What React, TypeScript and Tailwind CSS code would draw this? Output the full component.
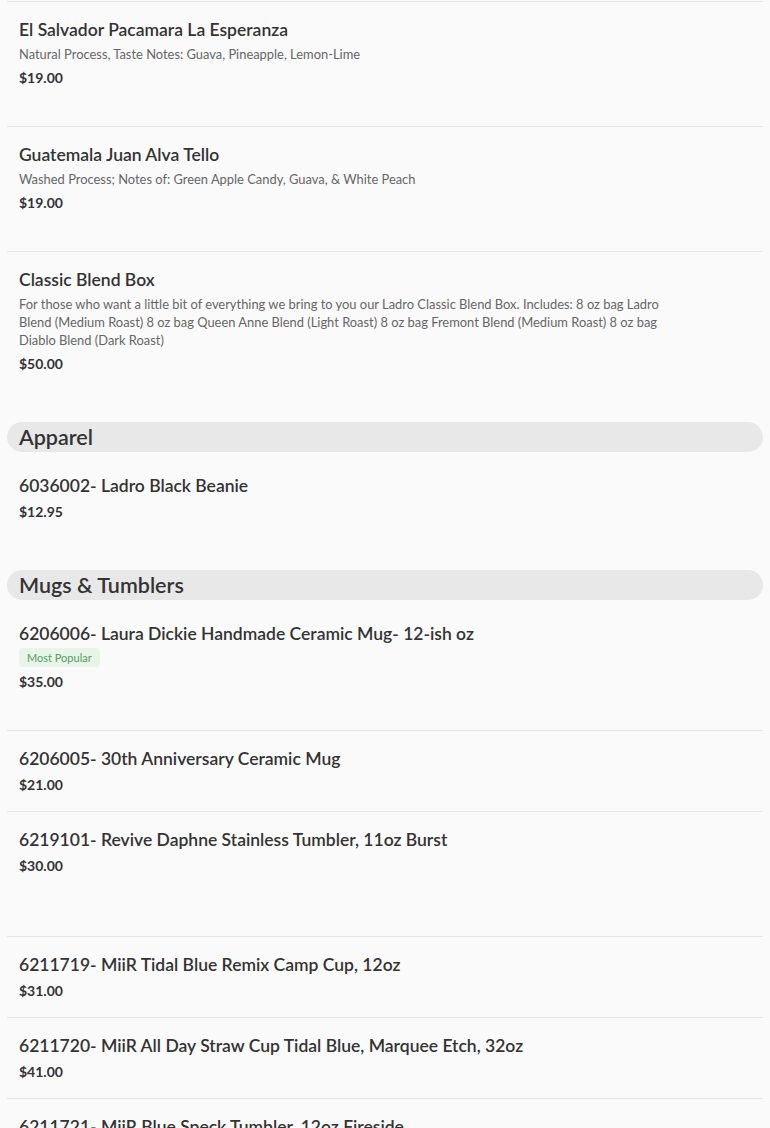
type Item = {
  title: string;
  desc?: string;
  badge?: string;
  price: string;
  tall?: boolean;
  border?: boolean;
};

type Section = {
  name?: string;
  items: Item[];
};

const sections: Section[] = [
  {
    items: [
      {
        title: "El Salvador Pacamara La Esperanza",
        desc: "Natural Process, Taste Notes: Guava, Pineapple, Lemon-Lime",
        price: "$19.00",
        tall: true,
        border: true,
      },
      {
        title: "Guatemala Juan Alva Tello",
        desc: "Washed Process; Notes of: Green Apple Candy, Guava, & White Peach",
        price: "$19.00",
        tall: true,
        border: true,
      },
      {
        title: "Classic Blend Box",
        desc: "For those who want a little bit of everything we bring to you our Ladro Classic Blend Box. Includes: 8 oz bag Ladro Blend (Medium Roast) 8 oz bag Queen Anne Blend (Light Roast) 8 oz bag Fremont Blend (Medium Roast) 8 oz bag Diablo Blend (Dark Roast)",
        price: "$50.00",
        tall: true,
      },
    ],
  },
  {
    name: "Apparel",
    items: [{ title: "6036002- Ladro Black Beanie", price: "$12.95" }],
  },
  {
    name: "Mugs & Tumblers",
    items: [
      {
        title: "6206006- Laura Dickie Handmade Ceramic Mug- 12-ish oz",
        badge: "Most Popular",
        price: "$35.00",
        tall: true,
        border: true,
      },
      { title: "6206005- 30th Anniversary Ceramic Mug", price: "$21.00", border: true },
      {
        title: "6219101- Revive Daphne Stainless Tumbler, 11oz Burst",
        price: "$30.00",
        tall: true,
        border: true,
      },
      { title: "6211719- MiiR Tidal Blue Remix Camp Cup, 12oz", price: "$31.00", border: true },
      {
        title: "6211720- MiiR All Day Straw Cup Tidal Blue, Marquee Etch, 32oz",
        price: "$41.00",
        border: true,
      },
      { title: "6211721- MiiR Blue Speck Tumbler, 12oz Fireside", price: "$36.00", border: true },
    ],
  },
];

function MenuItem({ item }: { item: Item }) {
  return (
    <div
      className={`px-3 pt-[17px] pb-4 ${item.tall ? "min-h-[125px]" : ""} ${
        item.border ? "border-b border-[#e6e6e6]" : ""
      }`}
    >
      <div className="max-w-[645px]">
        <h3 className="text-[17.5px] leading-[22px] font-semibold text-[#333333]">{item.title}</h3>
        {item.desc && (
          <p className="mt-1 text-[12.9px] leading-[18px] text-[#666666]">{item.desc}</p>
        )}
        {item.badge && (
          <div className="mt-[3px] flex">
            <span className="rounded-sm bg-[#e7f5e8] px-2 py-[3px] text-[11px] leading-[13px] text-[#5b9a63]">
              {item.badge}
            </span>
          </div>
        )}
        <p className="mt-[5px] text-[14px] leading-[20px] font-bold text-[#333333]">{item.price}</p>
      </div>
    </div>
  );
}

export default function App() {
  return (
    <div
      className="min-h-screen bg-[#fafafa] px-[7px] pt-px"
      style={{ fontFamily: "Lato, 'Noto Sans', sans-serif" }}
    >
      <div className="border-t border-[#e6e6e6]" />
      {sections.map((s, i) => (
        <section key={i}>
          {s.name && (
            <h2 className="mb-[6px] rounded-full bg-[#e8e8e8] px-3 text-[21.5px] leading-[30px] font-semibold text-[#333333]">
              {s.name}
            </h2>
          )}
          {s.items.map((it, j) => (
            <MenuItem key={j} item={it} />
          ))}
          {!s.name || s.name === "Apparel" ? <div className="h-[32px]" /> : null}
        </section>
      ))}
    </div>
  );
}
